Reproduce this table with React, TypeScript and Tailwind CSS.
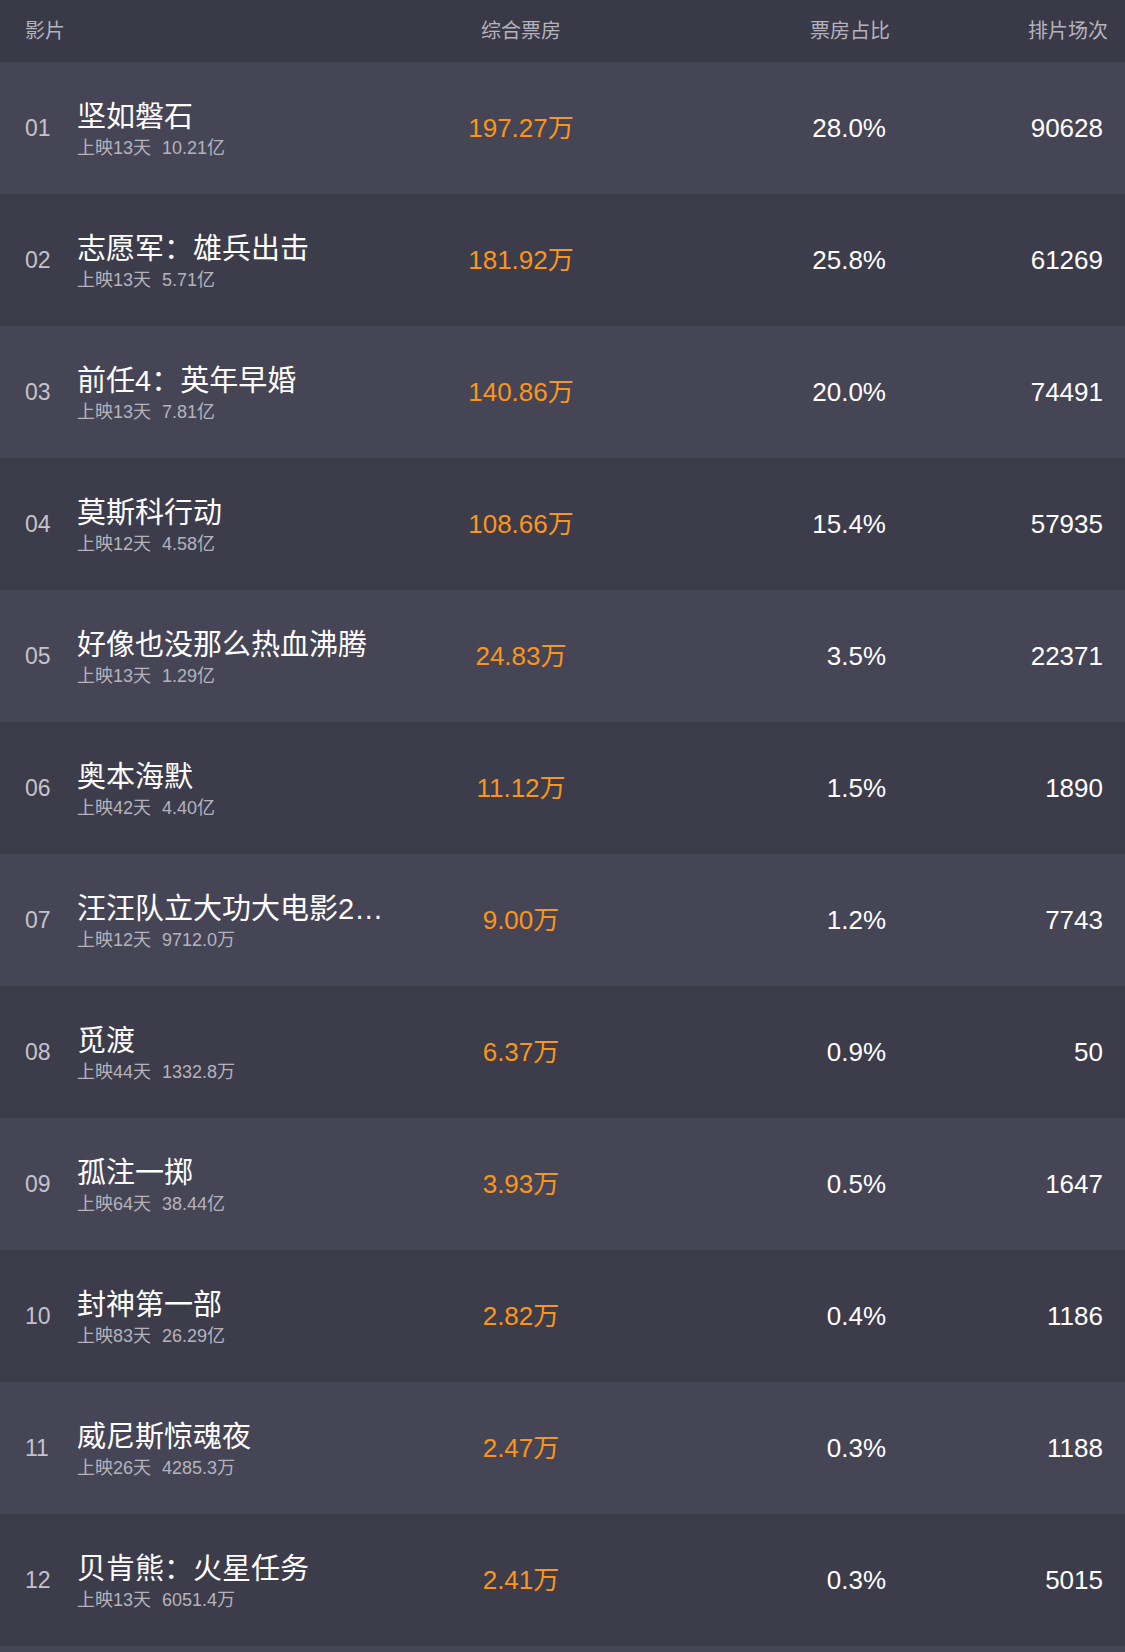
import React from "react";

type Row = {
  rank: string;
  title: string;
  days: string;
  total: string;
  box: string;
  ratio: string;
  shows: string;
};

const rows: Row[] = [
  { rank: "01", title: "坚如磐石", days: "上映13天", total: "10.21亿", box: "197.27万", ratio: "28.0%", shows: "90628" },
  { rank: "02", title: "志愿军：雄兵出击", days: "上映13天", total: "5.71亿", box: "181.92万", ratio: "25.8%", shows: "61269" },
  { rank: "03", title: "前任4：英年早婚", days: "上映13天", total: "7.81亿", box: "140.86万", ratio: "20.0%", shows: "74491" },
  { rank: "04", title: "莫斯科行动", days: "上映12天", total: "4.58亿", box: "108.66万", ratio: "15.4%", shows: "57935" },
  { rank: "05", title: "好像也没那么热血沸腾", days: "上映13天", total: "1.29亿", box: "24.83万", ratio: "3.5%", shows: "22371" },
  { rank: "06", title: "奥本海默", days: "上映42天", total: "4.40亿", box: "11.12万", ratio: "1.5%", shows: "1890" },
  { rank: "07", title: "汪汪队立大功大电影2…", days: "上映12天", total: "9712.0万", box: "9.00万", ratio: "1.2%", shows: "7743" },
  { rank: "08", title: "觅渡", days: "上映44天", total: "1332.8万", box: "6.37万", ratio: "0.9%", shows: "50" },
  { rank: "09", title: "孤注一掷", days: "上映64天", total: "38.44亿", box: "3.93万", ratio: "0.5%", shows: "1647" },
  { rank: "10", title: "封神第一部", days: "上映83天", total: "26.29亿", box: "2.82万", ratio: "0.4%", shows: "1186" },
  { rank: "11", title: "威尼斯惊魂夜", days: "上映26天", total: "4285.3万", box: "2.47万", ratio: "0.3%", shows: "1188" },
  { rank: "12", title: "贝肯熊：火星任务", days: "上映13天", total: "6051.4万", box: "2.41万", ratio: "0.3%", shows: "5015" },
];

export default function App() {
  return (
    <div
      className="w-[1125px] h-[1652px] overflow-hidden bg-[#464556]"
      style={{ fontFamily: '"Liberation Sans", "Noto Sans CJK SC", sans-serif' }}
    >
      <div className="h-[62px] bg-[#3a3947] grid grid-cols-[420px_202px_268px_218px] items-center text-[20px] text-[#b4b3bc]">
        <div className="pl-[25px]">影片</div>
        <div className="text-center">综合票房</div>
        <div className="text-right">票房占比</div>
        <div className="text-right">排片场次</div>
      </div>
      {rows.map((r, i) => (
        <div
          key={r.rank}
          className={
            "h-[132px] grid grid-cols-[420px_202px_264px_217px] items-center " +
            (i % 2 === 0 ? "bg-[#464556]" : "bg-[#3d3c4b]")
          }
        >
          <div className="flex items-center pl-[25px]">
            <div className="w-[52px] text-[23px] text-[#c4c3cb]">{r.rank}</div>
            <div className="flex flex-col">
              <div className="text-[29px] leading-[40px] text-white whitespace-nowrap">{r.title}</div>
              <div className="text-[18px] leading-[22px] text-[#b4b3bc] whitespace-nowrap">
                {r.days}
                <span className="ml-[11px]">{r.total}</span>
              </div>
            </div>
          </div>
          <div className="text-center text-[26px] text-[#fa951c]">{r.box}</div>
          <div className="text-right text-[26px] text-white">{r.ratio}</div>
          <div className="text-right text-[26px] text-white">{r.shows}</div>
        </div>
      ))}
    </div>
  );
}
